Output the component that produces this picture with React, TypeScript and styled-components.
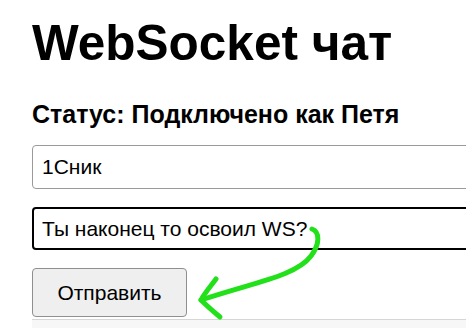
import styled, { createGlobalStyle } from "styled-components";

const GlobalStyle = createGlobalStyle`
  html, body {
    margin: 0;
    padding: 0;
    background: #ffffff;
    overflow: hidden;
  }
  body {
    font-family: "Liberation Sans", Arial, sans-serif;
    color: #000;
  }
`;

const Page = styled.div`
  position: relative;
  width: 466px;
  height: 328px;
  overflow: hidden;
  padding-left: 32px;
  box-sizing: border-box;
`;

const Title = styled.h1`
  margin: 0;
  padding-top: 17px;
  font-size: 49.5px;
  line-height: 52px;
  font-weight: 700;
  white-space: nowrap;
`;

const Status = styled.h3`
  margin: 0;
  margin-top: 31px;
  font-size: 25px;
  line-height: 28px;
  font-weight: 700;
  white-space: nowrap;
`;

const Form = styled.div`
  display: flex;
  flex-direction: column;
  align-items: flex-start;
  gap: 18px;
  margin-top: 17px;
  width: 520px;
`;

const Field = styled.input<{ $active?: boolean }>`
  width: 100%;
  height: ${(p) => (p.$active ? "43px" : "44px")};
  box-sizing: border-box;
  font-family: "Liberation Sans", Arial, sans-serif;
  font-size: 21px;
  color: #000;
  border-radius: 4px;
  border: ${(p) => (p.$active ? "2px solid #000" : "1px solid #9a9a9a")};
  padding: 0 9px;
  padding-left: ${(p) => (p.$active ? "8px" : "9px")};
  outline: none;
  background: #fff;
`;

const SendButton = styled.button`
  width: 155px;
  height: 49px;
  box-sizing: border-box;
  font-family: "Liberation Sans", Arial, sans-serif;
  font-size: 21px;
  color: #000;
  background: #efefef;
  border: 1px solid #8f8f8f;
  border-radius: 4px;
  cursor: pointer;
`;

const Messages = styled.div`
  margin-top: 2px;
  width: 520px;
  height: 40px;
  border-top: 1px solid #d6d6d6;
  background: #f7f7f7;
`;

const Arrow = styled.svg`
  position: absolute;
  left: 0;
  top: 0;
  pointer-events: none;
`;

export default function App() {
  return (
    <>
      <GlobalStyle />
      <Page>
        <Title>WebSocket чат</Title>
        <Status>Статус: Подключено как Петя</Status>
        <Form>
          <Field defaultValue="1Сник" />
          <Field $active defaultValue="Ты наконец то освоил WS?" />
          <SendButton>Отправить</SendButton>
        </Form>
        <Messages />
        <Arrow width="466" height="328" viewBox="0 0 466 328">
          <g fill="none" stroke="#22e01a" strokeWidth="5" strokeLinecap="round" strokeLinejoin="round">
            <path d="M312 229 C320 232 320 244 311 256 C296 276 255 282 201 300" />
            <path d="M216 279 C210 287 204 294 201 300 C207 306 214 312 220 317" />
          </g>
        </Arrow>
      </Page>
    </>
  );
}
